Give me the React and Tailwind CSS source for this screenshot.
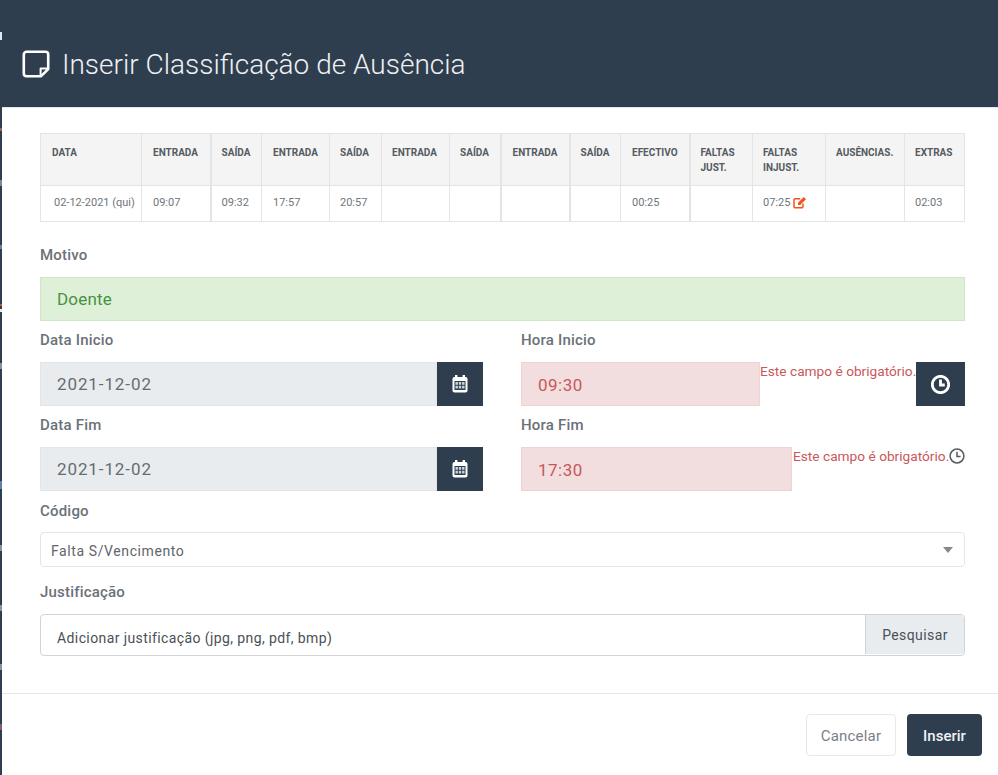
const dark = "bg-[#2f3e4e]";

const columns = [
    { label: "DATA", width: 101, value: "02-12-2021 (qui)", pad: "pl-[13px]", headPad: "pl-[11px]" },
    { label: "ENTRADA", width: 69, value: "09:07", pad: "pl-[11px]", headPad: "pl-[11px]", thick: true },
    { label: "SAÍDA", width: 51, value: "09:32" },
    { label: "ENTRADA", width: 68, value: "17:57", pad: "pl-[11px]", headPad: "pl-[11px]" },
    { label: "SAÍDA", width: 52, value: "20:57" },
    { label: "ENTRADA", width: 68, value: "" },
    { label: "SAÍDA", width: 51, value: "", thick: true },
    { label: "ENTRADA", width: 69, value: "", headPad: "pl-[11px]", thick: true },
    { label: "SAÍDA", width: 51, value: "" },
    { label: "EFECTIVO", width: 69, value: "00:25", pad: "pl-[11px]", headPad: "pl-[11px]", thick: true },
    { label: "FALTAS JUST.", width: 63, value: "" },
    { label: "FALTAS INJUST.", width: 73, value: "07:25", edit: true },
    { label: "AUSÊNCIAS.", width: 79, value: "" },
    { label: "EXTRAS", width: 60, value: "02:03" },
];

// bits of the page behind the modal that show in the left strip
const behind = [
    { top: 32, height: 8, color: "bg-[#dbe8f7]" },
    { top: 128, height: 3, color: "bg-[#8a6a5a]" },
    { top: 180, height: 6, color: "bg-[#7d8a96]" },
    { top: 245, height: 4, color: "bg-[#6a7f9c]" },
    { top: 304, height: 2, color: "bg-[#c8553d]" },
    { top: 309, height: 3, color: "bg-[#e8edf2]" },
    { top: 363, height: 6, color: "bg-[#8c9298]" },
    { top: 481, height: 8, color: "bg-[#5f7fa8]" },
    { top: 545, height: 6, color: "bg-[#8c9298]" },
    { top: 605, height: 6, color: "bg-[#8c9298]" },
    { top: 664, height: 6, color: "bg-[#8c9298]" },
    { top: 724, height: 6, color: "bg-[#8a5a70]" },
];

function NoteIcon() {
    return (
        <svg width="28" height="28" viewBox="0 0 28 28" fill="none" stroke="#fff" strokeWidth="2.6" strokeLinejoin="round" className="shrink-0">
            <path d="M4.5 1.8h19a2.7 2.7 0 0 1 2.7 2.7v14.6l-7.1 7.1H4.5a2.7 2.7 0 0 1-2.7-2.7v-19a2.7 2.7 0 0 1 2.7-2.7z" />
            <path d="M18.6 26v-7.6h7.6" strokeWidth="2" />
        </svg>
    );
}

function EditIcon() {
    return (
        <svg width="14" height="13" viewBox="0 0 14 13" fill="none" className="inline-block ml-[3px] mb-[2px]">
            <path d="M10 7.5v3a1.2 1.2 0 0 1-1.2 1.2H2.2A1.2 1.2 0 0 1 1 10.5V3.9a1.2 1.2 0 0 1 1.2-1.2h5" stroke="#f4511e" strokeWidth="1.5" />
            <path d="M5 6.8 10.8 1 13 3.2 7.2 9H5z" fill="#f4511e" />
        </svg>
    );
}

function CalendarIcon() {
    return (
        <svg width="16" height="18" viewBox="0 0 16 18">
            <rect x="3" y="0" width="2.4" height="4" fill="#fff" />
            <rect x="10.6" y="0" width="2.4" height="4" fill="#fff" />
            <rect x="0.5" y="2" width="15" height="15.5" rx="2" fill="#fff" />
            <rect x="2.5" y="6" width="11" height="9" fill="#2f3e4e" />
            <path d="M3.5 7h2.4v2.8H3.5zM6.8 7h2.4v2.8H6.8zM10.1 7h2.4v2.8h-2.4zM3.5 10.8h2.4v2.8H3.5zM6.8 10.8h2.4v2.8H6.8zM10.1 10.8h2.4v2.8h-2.4z" fill="#c9d4de" />
        </svg>
    );
}

function ClockIcon({ size, stroke, color }) {
    return (
        <svg width={size} height={size} viewBox="0 0 16 16" fill="none" stroke={color} strokeWidth={stroke}>
            <circle cx="8" cy="8" r="6.9" />
            <path d="M8 3.8v4.6h3.6" />
        </svg>
    );
}

function Label({ children, gap }) {
    return <div className={`text-[15px] leading-[22px] font-medium tracking-[0.2px] text-[#6b7178] ${gap}`}>{children}</div>;
}

function DateField({ label, value }) {
    return (
        <div className="w-[443px]">
            <Label gap="mb-[11px]">{label}</Label>
            <div className="flex h-[44px]">
                <div className="flex-1 bg-[#e9ecef] border border-[#e3e6e9] pl-4 pt-[2px] flex items-center text-[17px] tracking-[0.9px] text-[#666c72]">{value}</div>
                <div className={`w-[46px] ${dark} flex items-center justify-center`}>
                    <CalendarIcon />
                </div>
            </div>
        </div>
    );
}

function Required() {
    return <div className="text-[13.7px] leading-[18px] text-[#c9575a] whitespace-nowrap">Este campo é obrigatório.</div>;
}

export default function App() {
    return (
        <div className={`relative h-[775px] w-[998px] overflow-hidden ${dark} pl-[2px] font-['Roboto',sans-serif]`}>
            {behind.map((b, i) => (
                <div key={i} className={`absolute left-0 w-[2px] ${b.color}`} style={{ top: b.top, height: b.height }} />
            ))}
            <div className="h-full bg-white">
                <div className={`h-[108px] ${dark} border-b border-[#dee6ee] pl-5 pt-[44px] flex items-start gap-[12px] text-white`}>
                    <div className="mt-[6px]"><NoteIcon /></div>
                    <h1 className="text-[28px] leading-[40px] mt-[1px] font-light text-[#eef1f3]">Inserir Classificação de Ausência</h1>
                </div>

                <div className="pl-[38px] pr-[33px] pt-[25px]">
                    <table className="table-fixed w-[925px] border-collapse">
                        <colgroup>
                            {columns.map((col, i) => <col key={i} style={{ width: col.width }} />)}
                        </colgroup>
                        <thead>
                            <tr className="h-[52px] bg-[#f4f4f4]">
                                {columns.map((col, i) => (
                                    <th key={i} className={`border border-[#e4e4e4] ${col.thick ? "border-r-2" : ""} align-top ${col.headPad || "pl-[10px]"} pr-[2px] pt-[11px] text-left text-[10px] leading-[15px] font-bold text-[#555b61]`}>
                                        {col.label}
                                    </th>
                                ))}
                            </tr>
                        </thead>
                        <tbody>
                            <tr className="h-[36px]">
                                {columns.map((col, i) => (
                                    <td key={i} className={`border border-[#e4e4e4] ${col.thick ? "border-r-2" : ""} ${col.pad || "pl-[10px]"} pr-0 text-[11px] text-[#6f757b] whitespace-nowrap`}>
                                        {col.value}
                                        {col.edit && <EditIcon />}
                                    </td>
                                ))}
                            </tr>
                        </tbody>
                    </table>

                    <div className="mt-[22px]">
                        <Label gap="mb-[11px]">Motivo</Label>
                    </div>
                    <div className="h-[44px] bg-[#dff0d8] border border-[#cfe6c4] pl-4 pt-[2px] flex items-center text-[17px] tracking-[0.2px] text-[#46923f]">Doente</div>

                    <div className="mt-[8px] flex gap-[38px]">
                        <DateField label="Data Inicio" value="2021-12-02" />
                        <div className="w-[444px]">
                            <Label gap="mb-[11px]">Hora Inicio</Label>
                            <div className="flex h-[44px]">
                                <div className="w-[239px] shrink-0 bg-[#f2dede] border border-[#efd3d3] pl-4 pt-[3px] flex items-center text-[17px] tracking-[0.5px] text-[#c9575a]">09:30</div>
                                <div className="flex-1 min-w-0"><Required /></div>
                                <div className={`w-[49px] shrink-0 ${dark} flex items-center justify-center`}>
                                    <ClockIcon size={19} stroke={2.4} color="#fff" />
                                </div>
                            </div>
                        </div>
                    </div>

                    <div className="mt-[8px] flex gap-[38px]">
                        <DateField label="Data Fim" value="2021-12-02" />
                        <div className="w-[444px]">
                            <Label gap="mb-[11px]">Hora Fim</Label>
                            <div className="flex h-[44px]">
                                <div className="w-[271px] shrink-0 bg-[#f2dede] border border-[#efd3d3] pl-4 pt-[3px] flex items-center text-[17px] tracking-[0.5px] text-[#c9575a]">17:30</div>
                                <div className="flex-1 min-w-0 pl-[1px]"><Required /></div>
                                <div className="w-[16px] shrink-0 pt-[1px]">
                                    <ClockIcon size={16} stroke={1.5} color="#555b61" />
                                </div>
                            </div>
                        </div>
                    </div>

                    <div className="mt-[9px]">
                        <Label gap="mb-[10px]">Código</Label>
                    </div>
                    <div className="h-[35px] border border-[#e6e6e6] rounded-[4px] pl-[10px] pr-[11px] flex items-center justify-between text-[14px] tracking-[0.6px] text-[#5f656b]">
                        <span className="pt-[3px]">Falta S/Vencimento</span>
                        <span className="w-0 h-0 border-x-[5px] border-x-transparent border-t-[6px] border-t-[#888]" />
                    </div>

                    <div className="mt-[14px]">
                        <Label gap="mb-[11px]">Justificação</Label>
                    </div>
                    <div className="h-[42px] border border-[#ced4da] rounded-[4px] flex overflow-hidden text-[14px] tracking-[0.4px] text-[#495057]">
                        <div className="flex-1 pl-4 pt-[6px] flex items-center">Adicionar justificação (jpg, png, pdf, bmp)</div>
                        <div className="w-[99px] bg-[#e9ecef] border-l border-[#ced4da] pt-[2px] flex items-center justify-center mb-[1px]">Pesquisar</div>
                    </div>
                </div>

                <div className="mt-[37px] border-t border-[#e4e6e8] pt-[20px] pr-[16px] flex justify-end gap-[11px]">
                    <button className="w-[90px] h-[42px] pt-[2px] border border-[#e8e8e8] rounded-[4px] text-[15px] tracking-[0.2px] text-[#7b8086]">Cancelar</button>
                    <button className={`w-[75px] h-[42px] pt-[2px] rounded-[4px] ${dark} text-[15px] font-medium text-[#f0f2f4]`}>Inserir</button>
                </div>
            </div>
        </div>
    );
}
